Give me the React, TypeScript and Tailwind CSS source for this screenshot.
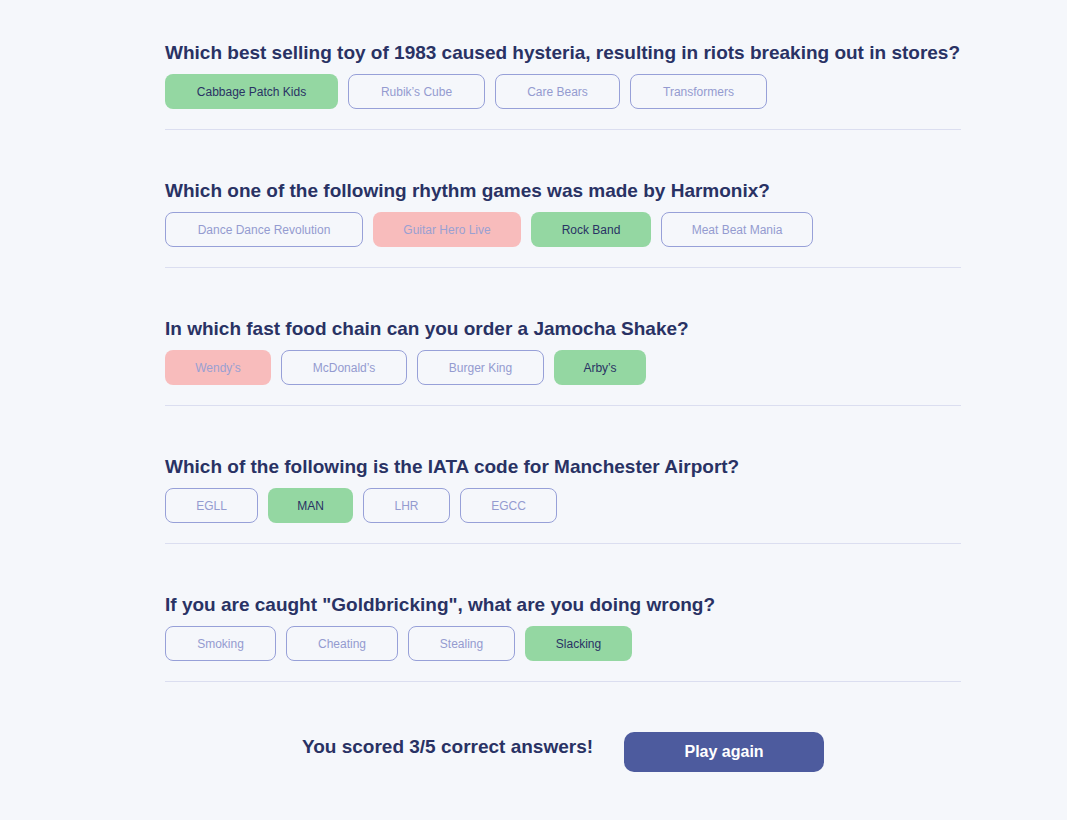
import React from "react";

type Question = {
  question: string;
  answers: string[];
  widths: string[];
  correct: string;
  picked: string;
};

const questions: Question[] = [
  {
    question:
      "Which best selling toy of 1983 caused hysteria, resulting in riots breaking out in stores?",
    answers: ["Cabbage Patch Kids", "Rubik\u2019s Cube", "Care Bears", "Transformers"],
    widths: ["w-[173px]", "w-[137px]", "w-[125px]", "w-[137px]"],
    correct: "Cabbage Patch Kids",
    picked: "Cabbage Patch Kids",
  },
  {
    question: "Which one of the following rhythm games was made by Harmonix?",
    answers: ["Dance Dance Revolution", "Guitar Hero Live", "Rock Band", "Meat Beat Mania"],
    widths: ["w-[198px]", "w-[148px]", "w-[120px]", "w-[152px]"],
    correct: "Rock Band",
    picked: "Guitar Hero Live",
  },
  {
    question: "In which fast food chain can you order a Jamocha Shake?",
    answers: ["Wendy\u2019s", "McDonald\u2019s", "Burger King", "Arby\u2019s"],
    widths: ["w-[106px]", "w-[126px]", "w-[127px]", "w-[92px]"],
    correct: "Arby\u2019s",
    picked: "Wendy\u2019s",
  },
  {
    question: "Which of the following is the IATA code for Manchester Airport?",
    answers: ["EGLL", "MAN", "LHR", "EGCC"],
    widths: ["w-[93px]", "w-[85px]", "w-[87px]", "w-[97px]"],
    correct: "MAN",
    picked: "MAN",
  },
  {
    question: 'If you are caught "Goldbricking", what are you doing wrong?',
    answers: ["Smoking", "Cheating", "Stealing", "Slacking"],
    widths: ["w-[111px]", "w-[112px]", "w-[107px]", "w-[107px]"],
    correct: "Slacking",
    picked: "Slacking",
  },
];

function AnswerButton({
  label,
  correct,
  picked,
  width,
}: {
  label: string;
  correct: boolean;
  picked: boolean;
  width: string;
}) {
  const base = `h-[35px] ${width} rounded-[8px] text-[12px] whitespace-nowrap`;
  if (correct) {
    return <button className={`${base} bg-[#94D7A2] text-[#293264]`}>{label}</button>;
  }
  if (picked) {
    return <button className={`${base} bg-[#F8BCBC] text-[#9aa0d2]`}>{label}</button>;
  }
  return (
    <button className={`${base} border border-[#97a0d8] text-[#949bd0]`}>{label}</button>
  );
}

export default function App() {
  return (
    <div
      className="min-h-[820px] bg-[#F5F7FB] text-[#293264]"
      style={{ fontFamily: '"Liberation Sans", Arial, sans-serif' }}
    >
      <div className="w-[796px] ml-[165px] pt-[41px]">
        {questions.map((q) => (
          <div key={q.question} className="border-b border-[#DBDEF0] pb-[20px] mb-[49px]">
            <h2 className="text-[19px] leading-[23px] font-bold mb-[10px]">{q.question}</h2>
            <div className="flex gap-[10px]">
              {q.answers.map((a, i) => (
                <AnswerButton
                  key={a}
                  label={a}
                  correct={a === q.correct}
                  picked={a === q.picked}
                  width={q.widths[i]}
                />
              ))}
            </div>
          </div>
        ))}
        <div className="flex items-center justify-center gap-[31px] mt-[50px]">
          <p className="text-[19px] font-bold -mt-[9px]">You scored 3/5 correct answers!</p>
          <button className="w-[200px] h-[40px] rounded-[10px] bg-[#4D5B9E] text-white text-[16px] font-bold">
            Play again
          </button>
        </div>
      </div>
    </div>
  );
}
